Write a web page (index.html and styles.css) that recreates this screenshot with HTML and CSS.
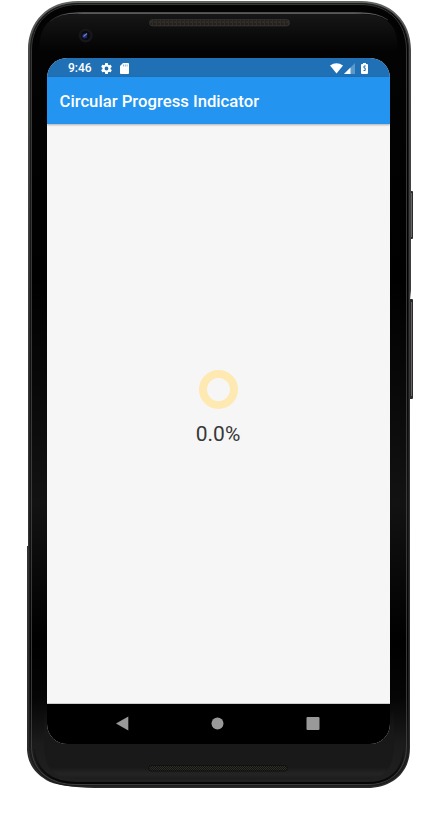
FILE: index.html
```html
<!DOCTYPE html>
<html lang="en">
<head>
<meta charset="utf-8">
<title>Circular Progress Indicator</title>
<link rel="stylesheet" href="styles.css">
</head>
<body>
<div class="device">
  <svg class="frame" width="441" height="821" viewBox="0 0 441 821" aria-hidden="true">
    <defs>
      <linearGradient id="body" x1="0" y1="0" x2="0" y2="1">
        <stop offset="0" stop-color="#030303"/><stop offset=".08" stop-color="#030303"/>
        <stop offset=".35" stop-color="#000"/><stop offset=".64" stop-color="#121212"/>
        <stop offset=".82" stop-color="#000"/><stop offset=".89" stop-color="#050505"/>
        <stop offset=".95" stop-color="#1b1b1b"/><stop offset="1" stop-color="#202020"/>
      </linearGradient>
      <linearGradient id="panel" x1="0" y1="0" x2="0" y2="1">
        <stop offset="0" stop-color="#171717"/><stop offset="1" stop-color="#030303"/>
      </linearGradient>
      <linearGradient id="chin" x1="0" y1="0" x2="0" y2="1">
        <stop offset="0" stop-color="#161616" stop-opacity="0"/><stop offset=".4" stop-color="#181818"/>
        <stop offset=".83" stop-color="#191919"/><stop offset=".93" stop-color="#242424"/><stop offset="1" stop-color="#1c1c1c"/>
      </linearGradient>
      <linearGradient id="rim" x1="0" y1="0" x2="0" y2="1">
        <stop offset="0" stop-color="#626662"/><stop offset=".06" stop-color="#484a48"/>
        <stop offset=".5" stop-color="#373737"/><stop offset="1" stop-color="#2c2a2b"/>
      </linearGradient>
      <linearGradient id="shine">
        <stop offset="0" stop-color="#999" stop-opacity=".1"/><stop offset=".1" stop-color="#999"/>
        <stop offset=".9" stop-color="#999"/><stop offset="1" stop-color="#999" stop-opacity=".3"/>
      </linearGradient>
      <linearGradient id="groove" gradientUnits="userSpaceOnUse" x1="0" y1="745" x2="0" y2="783">
        <stop offset="0" stop-color="#050505" stop-opacity="0"/><stop offset="1" stop-color="#050505"/>
      </linearGradient>
      <pattern id="mesh" width="4" height="4" patternUnits="userSpaceOnUse">
        <rect width="4" height="4" fill="#25221e"/><path d="M0 0v4M2 2h2" stroke="#3a3632"/>
      </pattern>
      <pattern id="mesh2" width="2" height="2" patternUnits="userSpaceOnUse">
        <rect width="2" height="2" fill="#131312"/><path d="M0 0h1v1H0zM1 1h1v1H1z" fill="#302d28"/>
      </pattern>
    </defs>
    <rect x="408" y="191" width="5" height="48" rx="1" fill="#2b292a"/>
    <rect x="411" y="193" width="1" height="44" fill="#6a6465"/>
    <rect x="408" y="299" width="5" height="100" rx="1" fill="#2b292a"/>
    <rect x="411" y="302" width="1" height="94" fill="#6a6465"/>
    <path d="M27 546h4v205h-4z" fill="#393939"/>
    <path d="M28 50C28 21 48 1 78 1H361C391 1 411 21 411 50V290L410 300V748C410 772 393 788 367 788H94Q63 787 50 782C36 775 27 764 27 748V546H28Z" fill="url(#rim)"/>
    <path d="M30.500 50C30.500 22 49 3.500 78 3.500H361C390 3.500 408.500 22 408.500 50V748C408.500 771 392 786 367 786H77C47 786 29.500 770 29.500 746Z" fill="url(#body)" stroke="#1b1c1b"/>
    <path d="M31.500 50C31.500 23 50 4.500 78 4.500H361C389 4.500 406.500 23 406.500 50V746C406.500 770 391 784.500 367 784.500H77C47 784.500 31.500 769 31.500 746Z" fill="none" stroke="#444644" stroke-width=".8"/>
    <path d="M33 50C33 23 50 6 78 6H361C388 6 405 23 405 50V746C405 769 390 783 367 783H77C47 783 33 768 33 746Z" fill="url(#body)"/>
    <path d="M37 51C38 23 49 13 80 13H360C389 13 398 23 399 51Z" fill="url(#panel)"/>
    <path d="M37 50C37 24 48 12 78 12M361 12C389 12 400 24 400 50" fill="none" stroke="#030303" stroke-width="4"/>
    <path d="M50 21Q60 13 77 13L361 13.010Q378 13 388 20" fill="none" stroke="url(#shine)"/>
    <path d="M44 710H394V744C394 766 386 779 366 779H80C53 779 44 769 44 744Z" fill="url(#chin)"/>
    <path d="M34 749C36 770 50 783 77 783H367C389 783 402 772 404 750" fill="none" stroke="url(#groove)" stroke-width="2"/>
    <rect x="149.500" y="19.500" width="140" height="6.500" rx="3" fill="url(#mesh)" stroke="#3a3a3a" stroke-width=".6"/>
    <rect x="148.500" y="765.500" width="139" height="5.500" rx="2.700" fill="url(#mesh2)" stroke="#111"/>
    <circle cx="85.700" cy="35.500" r="7" fill="#171719"/>
    <circle cx="85.700" cy="35.500" r="4.500" fill="#090a12"/>
    <circle cx="84.700" cy="36" r="2.500" fill="#202a68"/>
    <path d="M83.500 36.500L87 33.500" stroke="#7182c5" stroke-width="1.200"/>
  </svg>
  <main class="screen">
    <header class="status">
      <span class="time">9:46</span>
      <svg class="gear" width="13" height="13" viewBox="0 0 24 24"><path fill="#fff" fill-rule="evenodd" d="M19.400 13c.1-.7.1-1.300 0-2l2.200-1.700c.2-.2.300-.5.100-.7l-2-3.500c-.1-.2-.4-.3-.6-.2l-2.500 1c-.5-.4-1.100-.7-1.700-1l-.4-2.600c0-.2-.2-.4-.5-.4h-4c-.3 0-.5.200-.5.400l-.4 2.600c-.6.300-1.200.6-1.700 1l-2.500-1c-.2-.1-.5 0-.6.200l-2 3.500c-.1.200-.1.500.1.700L4.600 11a8 8 0 0 0 0 2l-2.200 1.700c-.2.200-.2.500-.1.700l2 3.500c.1.200.4.300.6.200l2.500-1c.5.400 1.100.7 1.700 1l.4 2.600c0 .2.200.4.500.4h4c.3 0 .5-.2.500-.4l.4-2.600c.6-.3 1.200-.6 1.700-1l2.500 1c.2.100.5 0 .6-.2l2-3.500c.1-.2.1-.5-.1-.7ZM12 15.500a3.500 3.500 0 1 1 0-7 3.500 3.500 0 0 1 0 7Z"/></svg>
      <svg class="card" width="9" height="11" viewBox="0 0 9 11"><path fill="#fff" d="M3 0h5q1 0 1 1v9q0 1-1 1H1q-1 0-1-1V3Z"/><path d="M3.500 1.500v2M5.300 1.500v2M7.100 1.500v2" stroke="#1f70b5" stroke-width=".5"/></svg>
      <svg class="wifi" width="13" height="11" viewBox="0 0 13 11"><path fill="#fff" d="M0 2.500Q6.500-2 13 2.500L6.500 10.500Z"/></svg>
      <svg class="signal" width="11" height="11" viewBox="0 0 11 11"><path fill="#5b98cc" d="M0 11L11 0V11Z"/><path fill="#fff" d="M0 11L6.500 4.500V11Z"/></svg>
      <svg class="battery" width="7" height="11" viewBox="0 0 7 11"><path fill="#fff" d="M2 0h3v1h1q1 0 1 1v8q0 1-1 1H1q-1 0-1-1V2q0-1 1-1h1Z"/><path fill="none" stroke="#1f70b5" stroke-width="1" d="M4.700 3H3v2h1.200v2.500H2.500"/></svg>
    </header>
    <h1 class="appbar">Circular Progress Indicator</h1>
    <section class="content">
      <div class="ring"></div>
      <p class="value">0.0%</p>
    </section>
    <nav class="nav">
      <svg width="13" height="16" viewBox="0 0 13 16"><path fill="#999" d="M0 7.500L12.300.5V14.500Z"/></svg>
      <svg width="13" height="16" viewBox="0 0 13 16"><circle cx="6.500" cy="7.500" r="6" fill="#999"/></svg>
      <svg width="14" height="16" viewBox="0 0 14 16"><rect x=".5" y="1" width="13" height="13" rx="1" fill="#999"/></svg>
    </nav>
  </main>
</div>
</body>
</html>
```
FILE: styles.css
```css
* { box-sizing: border-box; }
body { margin: 0; background: #fff; font-family: Roboto, "Liberation Sans", sans-serif; }
.device { position: relative; width: 441px; height: 821px; padding: 58px 51px 77px 47px; overflow: hidden; }
.frame { position: absolute; inset: 0; }
.screen { position: relative; display: flex; flex-direction: column; width: 343px; height: 686px; border-radius: 20px; overflow: hidden; background: #f6f6f6; }
.status { flex: 0 0 19px; display: flex; align-items: center; padding: 1px 22px 0 21px; background: #1f70b5; color: #fff; }
.time { width: 32px; font-size: 12px; line-height: 18px; font-weight: 500; }
.card { margin-left: 7px; }
.wifi { margin-left: auto; }
.signal { margin-left: 1px; }
.battery { margin-left: 6px; }
.appbar { position: relative; flex: 0 0 47px; min-height: 0; margin: 0; padding-left: 12.500px; background: #2394f0; color: #fff; font-size: 16.700px; line-height: 50px; font-weight: 500; white-space: nowrap; box-shadow: 0 1px 2px rgba(0,0,0,.3); }
.content { flex: 1; display: flex; flex-direction: column; align-items: center; padding-top: 246px; border-bottom: 1px solid #ccc; }
.ring { width: 39px; height: 39px; margin-right: 1px; border: 8px solid #fde9b1; border-radius: 50%; }
.value { margin: 12px 1px 0 0; font-size: 21px; line-height: 26px; color: #383838; }
.nav { flex: 0 0 40px; display: flex; justify-content: space-between; align-items: center; padding: 0 70px 0 69px; background: #000; }
```
